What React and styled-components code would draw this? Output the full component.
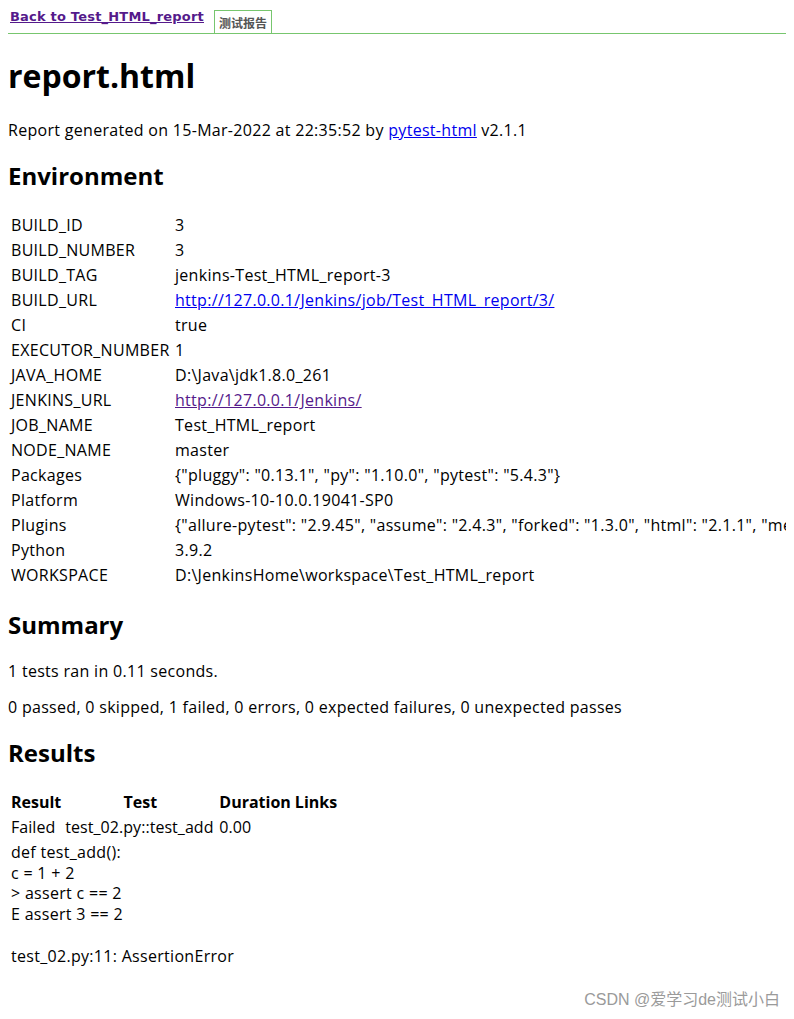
import styled, { createGlobalStyle } from 'styled-components';

const GlobalStyle = createGlobalStyle`
  html {
    overflow-x: hidden;
  }
  body {
    margin: 8px;
    background: #fff;
    color: #000;
    font-family: 'Open Sans', 'Noto Sans', sans-serif;
    font-size: 16px;
    line-height: 21px;
    letter-spacing: 0.3px;
  }
`;

const TopBar = styled.div`
  display: flex;
  align-items: flex-end;
  margin: -8px -8px 0 -8px;
  padding: 0 0 0 10px;
  height: 33px;
  border-bottom: 1px solid #77c66e;
  gap: 10px;
`;

const BackLink = styled.a`
  font-family: 'DejaVu Sans', Verdana, sans-serif;
  font-weight: 700;
  font-size: 13px;
  letter-spacing: 0.2px;
  color: #551a8b;
  text-decoration: underline;
  align-self: flex-start;
  margin-top: 6px;
`;

const Tab = styled.div`
  border: 1px solid #77c66e;
  border-bottom: none;
  height: 22px;
  padding: 0 4px;
  display: flex;
  align-items: center;
  font-family: 'Noto Sans CJK SC', sans-serif;
  font-size: 12px;
  font-weight: 700;
  letter-spacing: 0;
  color: #555;
`;

const Title = styled.h1`
  font-size: 32px;
  line-height: 42px;
  letter-spacing: 0;
  margin: 21px 0 23px;
`;

const Heading = styled.h2`
  font-size: 24px;
  line-height: 32px;
  letter-spacing: 0;
  margin: 20px 0;
`;

const Para = styled.p`
  margin: 16px 0;
  line-height: 20px;
`;

const Link = styled.a`
  color: ${(p) => (p.$visited ? '#551a8b' : '#0000ee')};
  text-decoration: underline;
`;

const Table = styled.table`
  width: max-content;
  border-spacing: 2px;
  white-space: nowrap;
  letter-spacing: ${(p) => p.$spacing || '0.3px'};
  td, th {
    padding: 1px;
    line-height: 21px;
    vertical-align: middle;
  }
`;

const KeyCell = styled.td`
  width: 160px;
`;

const HeadCell = styled.th`
  font-weight: 700;
  letter-spacing: 0;
  text-align: ${(p) => p.$align || 'center'};
  width: ${(p) => p.$w || 'auto'};
`;

const Log = styled.div`
  line-height: 20.7px;
  letter-spacing: 0.3px;
`;

const Watermark = styled.div`
  position: absolute;
  right: 14px;
  top: 989px;
  font-family: 'Liberation Sans', 'Noto Sans CJK SC', sans-serif;
  font-size: 16px;
  letter-spacing: 0;
  color: #9a9a9a;
`;

const env = [
  ['BUILD_ID', '3'],
  ['BUILD_NUMBER', '3'],
  ['BUILD_TAG', 'jenkins-Test_HTML_report-3'],
  ['BUILD_URL', 'http://127.0.0.1/Jenkins/job/Test_HTML_report/3/', 'link'],
  ['CI', 'true'],
  ['EXECUTOR_NUMBER', '1'],
  ['JAVA_HOME', 'D:\\Java\\jdk1.8.0_261'],
  ['JENKINS_URL', 'http://127.0.0.1/Jenkins/', 'visited'],
  ['JOB_NAME', 'Test_HTML_report'],
  ['NODE_NAME', 'master'],
  ['Packages', '{"pluggy": "0.13.1", "py": "1.10.0", "pytest": "5.4.3"}'],
  ['Platform', 'Windows-10-10.0.19041-SP0'],
  [
    'Plugins',
    '{"allure-pytest": "2.9.45", "assume": "2.4.3", "forked": "1.3.0", "html": "2.1.1", "metadata": "1.11.0", "rerunfailures": "10.2", "xdist": "2.5.0"}',
  ],
  ['Python', '3.9.2'],
  ['WORKSPACE', 'D:\\JenkinsHome\\workspace\\Test_HTML_report'],
];

const logLines = [
  'def test_add():',
  'c = 1 + 2',
  '> assert c == 2',
  'E assert 3 == 2',
  '',
  'test_02.py:11: AssertionError',
];

export default function App() {
  return (
    <>
      <GlobalStyle />
      <TopBar>
        <BackLink href="#">Back to Test_HTML_report</BackLink>
        <Tab>测试报告</Tab>
      </TopBar>

      <Title>report.html</Title>
      <Para>
        Report generated on 15-Mar-2022 at 22:35:52 by <Link href="#">pytest-html</Link> v2.1.1
      </Para>

      <Heading>Environment</Heading>
      <Table>
        <tbody>
          {env.map(([k, v, kind]) => (
            <tr key={k}>
              <KeyCell>{k}</KeyCell>
              <td>
                {kind ? (
                  <Link href="#" $visited={kind === 'visited'}>
                    {v}
                  </Link>
                ) : (
                  v
                )}
              </td>
            </tr>
          ))}
        </tbody>
      </Table>

      <Heading>Summary</Heading>
      <Para>1 tests ran in 0.11 seconds.</Para>
      <Para>0 passed, 0 skipped, 1 failed, 0 errors, 0 expected failures, 0 unexpected passes</Para>

      <Heading>Results</Heading>
      <Table $spacing="0.05px">
        <thead>
          <tr>
            <HeadCell $align="left" $w="49px">Result</HeadCell>
            <HeadCell $w="150px">Test</HeadCell>
            <HeadCell $w="64px">Duration</HeadCell>
            <HeadCell>Links</HeadCell>
          </tr>
        </thead>
        <tbody>
          <tr>
            <td>Failed</td>
            <td>test_02.py::test_add</td>
            <td>0.00</td>
            <td></td>
          </tr>
          <tr>
            <td colSpan={4}>
              <Log>
                {logLines.map((l, i) => (
                  <div key={i}>{l || '\u00a0'}</div>
                ))}
              </Log>
            </td>
          </tr>
        </tbody>
      </Table>

      <Watermark>CSDN @爱学习de测试小白</Watermark>
    </>
  );
}
